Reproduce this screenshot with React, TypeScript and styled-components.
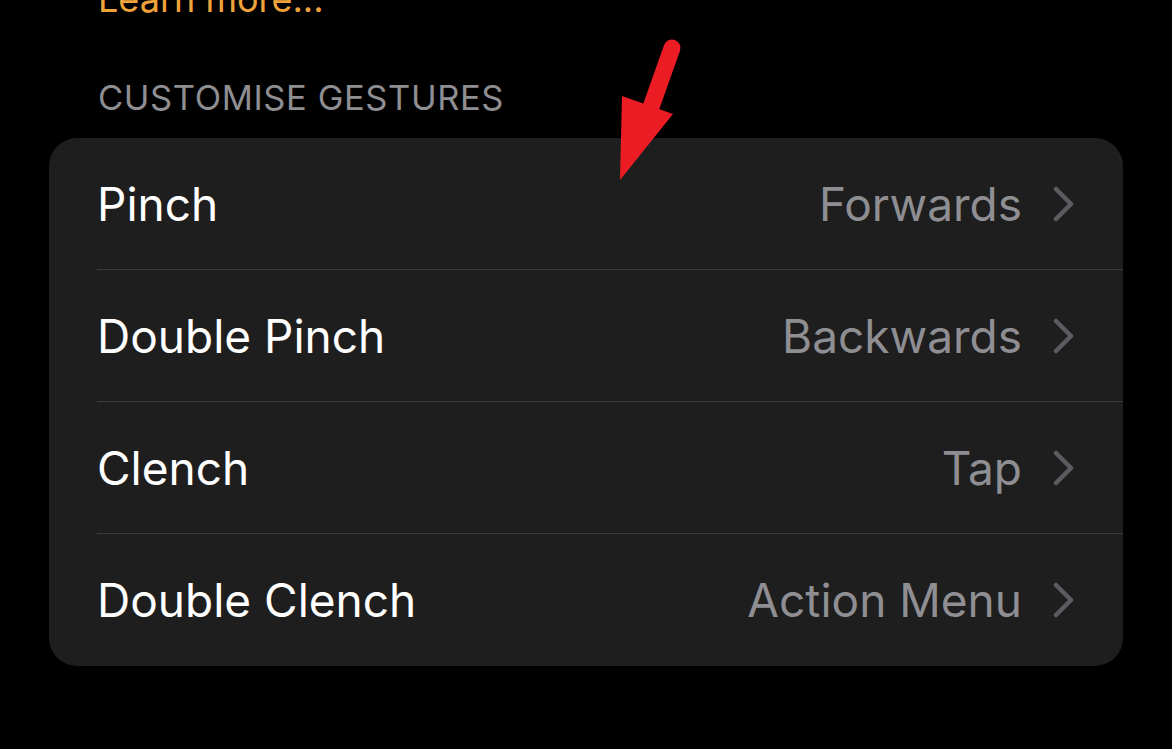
import styled, { createGlobalStyle } from "styled-components";

const GlobalStyle = createGlobalStyle`
  html, body {
    margin: 0;
    padding: 0;
    background: #000;
  }
  body {
    font-family: Inter, "Noto Sans", "Liberation Sans", sans-serif;
    -webkit-font-smoothing: antialiased;
  }
`;

const gestures = [
  { name: "Pinch", value: "Forwards" },
  { name: "Double Pinch", value: "Backwards" },
  { name: "Clench", value: "Tap" },
  { name: "Double Clench", value: "Action Menu" },
];

export default function App() {
  return (
    <>
      <GlobalStyle />
      <Page>
        <LearnMore>Learn more...</LearnMore>
        <SectionHeader>CUSTOMISE GESTURES</SectionHeader>
        <Card>
          {gestures.map((g, idx) => (
            <Row key={g.name} last={idx === gestures.length - 1}>
              <Label>{g.name}</Label>
              <Value>{g.value}</Value>
              <Chevron width="22" height="36" viewBox="0 0 22 36">
                <path d="M3 3 L18 18 L3 33" fill="none" stroke="#5b5b60" strokeWidth="4.5" strokeLinecap="round" strokeLinejoin="round" />
              </Chevron>
            </Row>
          ))}
        </Card>
        <Arrow width="80" height="160" viewBox="0 0 80 160">
          <line x1="52" y1="18" x2="30" y2="80" stroke="#ec1c24" strokeWidth="17" strokeLinecap="round" />
          <polygon points="2,66 53,84 0,150" fill="#ec1c24" />
        </Arrow>
      </Page>
    </>
  );
}

const Page = styled.div`
  position: relative;
  width: 1172px;
  height: 749px;
  overflow: hidden;
  background: #000;
  padding: 0 49px;
  box-sizing: border-box;
  display: flex;
  flex-direction: column;
`;

const LearnMore = styled.div`
  margin-top: -26px;
  padding-left: 49px;
  font-size: 36px;
  line-height: 50px;
  color: #f0a33a;
`;

const SectionHeader = styled.div`
  margin-top: 54px;
  padding-left: 49px;
  font-size: 34.5px;
  line-height: 40px;
  letter-spacing: 0.6px;
  color: #8e8e93;
`;

const Card = styled.div`
  margin-top: 20px;
  background: #1e1e1e;
  border-radius: 28px;
  overflow: hidden;
  display: flex;
  flex-direction: column;
`;

const Row = styled.div<{ last: boolean }>`
  height: 132px;
  margin-left: 48px;
  padding-right: 48px;
  box-sizing: border-box;
  display: flex;
  align-items: center;
  border-bottom: ${(p) => (p.last ? "none" : "1px solid #3a3a3c")};
`;

const Label = styled.div`
  flex: 1;
  font-size: 46px;
  color: #fff;
`;

const Value = styled.div`
  font-size: 46px;
  color: #8e8e93;
  margin-right: 31px;
`;

const Chevron = styled.svg`
  display: block;
`;

const Arrow = styled.svg`
  position: absolute;
  left: 620px;
  top: 30px;
`;
